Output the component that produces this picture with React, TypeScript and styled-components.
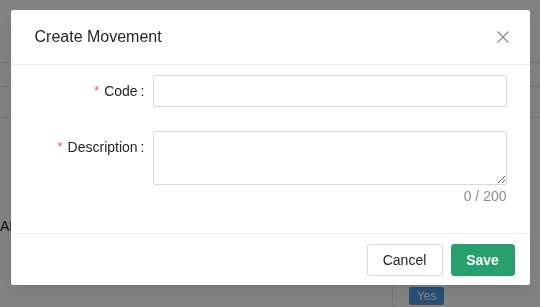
import React from 'react';
import styled, { createGlobalStyle } from 'styled-components';

const GlobalStyle = createGlobalStyle`
  html, body {
    margin: 0;
    padding: 0;
    width: 540px;
    height: 307px;
    overflow: hidden;
    font-family: "Liberation Sans", Arial, sans-serif;
  }
  * {
    box-sizing: border-box;
  }
`;

const Page = styled.div`
  position: relative;
  width: 540px;
  height: 307px;
  background: #ffffff;
  overflow: hidden;
  display: flex;
  flex-direction: column;
`;

const PageBar = styled.div<{ h: number }>`
  height: ${({ h }) => h}px;
  flex-shrink: 0;
  border-bottom: 1px solid #e4e4e4;
`;

const SectionTitle = styled.div`
  margin-top: 98px;
  height: 20px;
  line-height: 20px;
  font-size: 14px;
  color: #262626;
`;

const TableRow = styled.div`
  margin-top: auto;
  height: 27px;
  display: flex;
  align-items: flex-start;
`;

const TableCell = styled.div<{ w?: number }>`
  width: ${({ w }) => (w ? `${w}px` : 'auto')};
  height: 100%;
  border-right: ${({ w }) => (w ? '1px solid #e4e4e4' : 'none')};
  padding-left: ${({ w }) => (w ? 0 : 16)}px;
  padding-top: 6px;
`;

const Badge = styled.span`
  display: inline-block;
  width: 35px;
  height: 18px;
  line-height: 18px;
  text-align: center;
  font-size: 12px;
  color: #ffffff;
  background: #4a9be6;
  border-radius: 2px;
`;

const Overlay = styled.div`
  position: fixed;
  inset: 0;
  background: rgba(0, 0, 0, 0.49);
  display: flex;
  justify-content: center;
  align-items: flex-start;
  padding-top: 10px;
`;

const Modal = styled.div`
  width: 519px;
  background: #ffffff;
  border-radius: 2px;
  box-shadow: 0 3px 6px -4px rgba(0, 0, 0, 0.12), 0 6px 16px rgba(0, 0, 0, 0.08);
  display: flex;
  flex-direction: column;
`;

const Header = styled.div`
  height: 55px;
  padding: 0 21px 0 24px;
  border-bottom: 1px solid #ececec;
  display: flex;
  align-items: center;
  justify-content: space-between;
`;

const Title = styled.div`
  font-size: 16px;
  color: #262626;
  line-height: 22px;
`;

const CloseButton = styled.button`
  width: 12px;
  height: 12px;
  padding: 0;
  border: 0;
  background: transparent;
  color: #8a8a8a;
  cursor: pointer;
  display: flex;
`;

const Body = styled.div`
  padding: 10px 23px 26px 24px;
  display: flex;
  flex-direction: column;
  gap: 24px;
`;

const FormItem = styled.div`
  display: flex;
  align-items: flex-start;
`;

const Label = styled.label<{ h: number }>`
  width: 118px;
  flex-shrink: 0;
  height: ${({ h }) => h}px;
  display: flex;
  align-items: center;
  justify-content: flex-end;
  font-size: 14px;
  color: #262626;
  white-space: nowrap;
`;

const Required = styled.span`
  color: #ff4d4f;
  font-size: 13px;
  margin-right: 5px;
  position: relative;
  top: -1px;
`;

const Colon = styled.span`
  margin: 0 8px 0 3px;
`;

const Control = styled.div`
  flex: 1;
  display: flex;
  flex-direction: column;
`;

const TextInput = styled.input`
  width: 100%;
  height: 32px;
  border: 1px solid #d9d9d9;
  border-radius: 2px;
  padding: 4px 11px;
  font-size: 14px;
  font-family: inherit;
  outline: none;
`;

const TextArea = styled.textarea`
  width: 100%;
  height: 54px;
  border: 1px solid #d9d9d9;
  border-radius: 2px;
  padding: 4px 11px;
  font-size: 14px;
  font-family: inherit;
  outline: none;
  resize: vertical;
  display: block;
`;

const Counter = styled.div`
  height: 22px;
  line-height: 22px;
  text-align: right;
  font-size: 14px;
  color: #8c8c8c;
`;

const Footer = styled.div`
  border-top: 1px solid #ececec;
  padding: 10px 15px 9px 16px;
  display: flex;
  justify-content: flex-end;
  gap: 8px;
`;

const Button = styled.button<{ primary?: boolean }>`
  height: 32px;
  width: ${({ primary }) => (primary ? 64 : 76)}px;
  padding: 0;
  border-radius: 3px;
  font-family: inherit;
  font-size: 14px;
  font-weight: ${({ primary }) => (primary ? 700 : 400)};
  cursor: pointer;
  border: 1px solid ${({ primary }) => (primary ? '#26a06c' : '#d9d9d9')};
  background: ${({ primary }) => (primary ? '#26a06c' : '#ffffff')};
  color: ${({ primary }) => (primary ? '#ffffff' : '#262626')};
`;

function CloseIcon() {
  return (
    <svg width="12" height="12" viewBox="0 0 12 12" fill="none">
      <path d="M0.5 0.5L11.5 11.5M11.5 0.5L0.5 11.5" stroke="currentColor" strokeWidth="1.1" />
    </svg>
  );
}

export default function App() {
  return (
    <>
      <GlobalStyle />
      <Page>
        <PageBar h={63} />
        <PageBar h={24} />
        <PageBar h={31} />
        <SectionTitle>ADJUSTMENTS</SectionTitle>
        <TableRow>
          <TableCell w={393} />
          <TableCell>
            <Badge>Yes</Badge>
          </TableCell>
        </TableRow>
      </Page>
      <Overlay>
        <Modal>
          <Header>
            <Title>Create Movement</Title>
            <CloseButton aria-label="Close">
              <CloseIcon />
            </CloseButton>
          </Header>
          <Body>
            <FormItem>
              <Label h={32}>
                <Required>*</Required>Code<Colon>:</Colon>
              </Label>
              <Control>
                <TextInput />
              </Control>
            </FormItem>
            <FormItem>
              <Label h={32}>
                <Required>*</Required>Description<Colon>:</Colon>
              </Label>
              <Control>
                <TextArea />
                <Counter>0 / 200</Counter>
              </Control>
            </FormItem>
          </Body>
          <Footer>
            <Button>Cancel</Button>
            <Button primary>Save</Button>
          </Footer>
        </Modal>
      </Overlay>
    </>
  );
}
